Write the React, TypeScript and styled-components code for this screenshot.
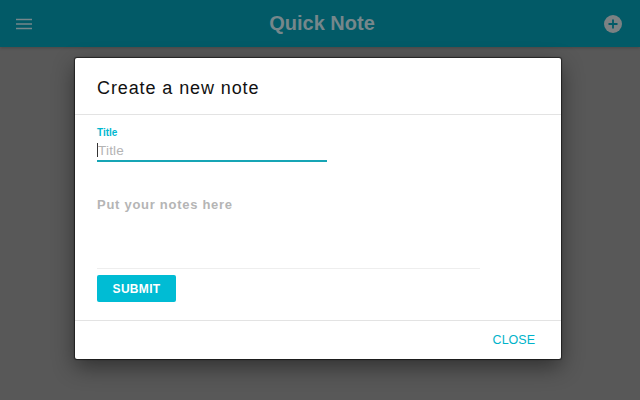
import * as React from "react";
import styled, { createGlobalStyle } from "styled-components";

const Global = createGlobalStyle`
  html, body {
    margin: 0;
    padding: 0;
    background: #585858;
  }
  body {
    font-family: "Liberation Sans", Arial, sans-serif;
  }
`;

const Page = styled.div`
  position: relative;
  width: 640px;
  height: 400px;
  overflow: hidden;
  background: #585858;
`;

const AppBar = styled.header`
  display: flex;
  align-items: center;
  justify-content: space-between;
  box-sizing: border-box;
  height: 47px;
  padding: 0 18px 0 15px;
  background: #025a67;
  box-shadow: 0 1px 3px rgba(0, 0, 0, 0.2);
`;

const AppTitle = styled.h1`
  margin: 0 0 0 7px;
  font-size: 20px;
  font-weight: 700;
  color: #76878b;
`;

const BarIcon = styled.svg`
  display: block;
  width: 18px;
  height: 18px;
`;

const Backdrop = styled.div`
  position: absolute;
  inset: 47px 0 0 0;
  display: flex;
  align-items: flex-start;
  padding: 11px 0 0 75px;
`;

const Dialog = styled.div`
  display: flex;
  flex-direction: column;
  width: 486px;
  height: 301px;
  background: #fff;
  border-radius: 2px;
  box-shadow: 0 0 1px 1px rgba(0, 0, 0, 0.55), 0 8px 22px rgba(0, 0, 0, 0.45);
`;

const DialogHead = styled.div`
  box-sizing: border-box;
  height: 57px;
  padding: 20px 22px 0;
  font-size: 18px;
  line-height: 20px;
  letter-spacing: 0.9px;
  color: #111;
  border-bottom: 1px solid #e3e3e3;
`;

const DialogBody = styled.form`
  flex: 1;
  display: flex;
  flex-direction: column;
  align-items: flex-start;
  padding: 12px 22px 0;
  border-bottom: 1px solid #e3e3e3;
`;

const FieldLabel = styled.label`
  font-size: 10px;
  line-height: 11px;
  font-weight: 700;
  color: #00b8d0;
`;

const TitleField = styled.div`
  display: flex;
  align-items: center;
  box-sizing: border-box;
  width: 230px;
  height: 22px;
  margin-top: 2px;
  border-bottom: 2px solid #16a5b5;
  font-size: 13.5px;
  letter-spacing: 0.2px;
  color: #b4b4b4;
`;

const Caret = styled.span`
  width: 1px;
  height: 14px;
  background: #333;
`;

const NotesField = styled.div`
  box-sizing: border-box;
  width: 383px;
  height: 72px;
  margin-top: 35px;
  font-size: 13px;
  line-height: 15px;
  font-weight: 700;
  letter-spacing: 0.72px;
  color: #b5b5b5;
  border-bottom: 1px solid #eeeeee;
`;

const SubmitButton = styled.button`
  width: 79px;
  height: 27px;
  margin-top: 6px;
  padding: 0;
  border: 0;
  border-radius: 2px;
  background: #00bcd4;
  color: #fff;
  font: 700 12px "Liberation Sans", Arial, sans-serif;
  letter-spacing: 0.3px;
`;

const DialogFoot = styled.div`
  display: flex;
  align-items: center;
  justify-content: flex-end;
  height: 38px;
  padding-right: 26px;
`;

const CloseButton = styled.button`
  padding: 0;
  border: 0;
  background: none;
  color: #00b3ca;
  font: 400 12.5px "Liberation Sans", Arial, sans-serif;
`;

export default function App() {
  return (
    <Page>
      <Global />
      <AppBar>
        <BarIcon viewBox="0 0 18 18">
          <path d="M1 4.5h16M1 9h16M1 13.5h16" stroke="#76878b" strokeWidth="1.3" fill="none" />
        </BarIcon>
        <AppTitle>Quick Note</AppTitle>
        <BarIcon viewBox="0 0 18 18">
          <circle cx="9" cy="9" r="9" fill="#7b8183" />
          <path d="M9 4.5v9M4.5 9h9" stroke="#025a67" strokeWidth="1.8" />
        </BarIcon>
      </AppBar>
      <Backdrop>
        <Dialog>
          <DialogHead>Create a new note</DialogHead>
          <DialogBody>
            <FieldLabel>Title</FieldLabel>
            <TitleField>
              <Caret />
              Title
            </TitleField>
            <NotesField>Put your notes here</NotesField>
            <SubmitButton type="button">SUBMIT</SubmitButton>
          </DialogBody>
          <DialogFoot>
            <CloseButton type="button">CLOSE</CloseButton>
          </DialogFoot>
        </Dialog>
      </Backdrop>
    </Page>
  );
}
